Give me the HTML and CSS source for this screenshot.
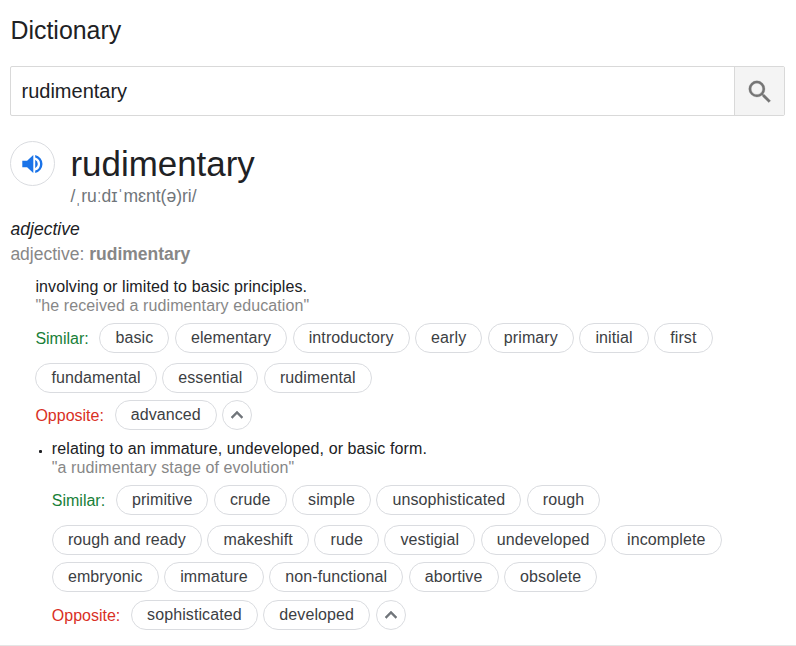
FILE: index.html
```html
<!DOCTYPE html>
<html lang="en">
<head>
<meta charset="utf-8">
<title>Dictionary</title>
<link rel="stylesheet" href="styles.css">
</head>
<body>
<main class="dictionary">
  <h1 class="title">Dictionary</h1>
  <div class="search">
    <div class="search-text">rudimentary</div>
    <div class="search-button">
      <svg width="30" height="30" viewBox="0 0 24 24" fill="#757575" stroke="#757575" stroke-width=".2"><path d="M15.5 14h-.79l-.28-.27A6.47 6.47 0 0 0 16 9.5 6.5 6.5 0 1 0 9.5 16c1.61 0 3.09-.59 4.23-1.57l.27.28v.79l5 4.99L20.49 19l-4.99-5zm-6 0C7.01 14 5 11.99 5 9.5S7.01 5 9.5 5 14 7.01 14 9.5 11.99 14 9.5 14z"/></svg>
    </div>
  </div>
  <header class="entry">
    <div class="speaker">
      <svg width="22" height="20" viewBox="0 0 22 20" fill="#1a73e8"><path d="M0.3 6.8h4.8L11.3 1v18l-6.2-5.8H.3zM13.2 5.8a4.7 4.7 0 0 1 0 8.4zM13.2 1a9.2 9.2 0 0 1 0 18v-2.4a6.9 6.9 0 0 0 0-13.2z"/></svg>
    </div>
    <div>
      <div class="headword">rudimentary</div>
      <div class="phonetic">/ˌruːdɪˈmɛnt(ə)ri/</div>
    </div>
  </header>
  <div class="pos">adjective</div>
  <div class="form">adjective: <b>rudimentary</b></div>

  <section class="sense">
    <div class="definition">involving or limited to basic principles.</div>
    <div class="example">"he received a rudimentary education"</div>
    <div class="row row-similar"><span class="label similar">Similar:</span><span class="chip">basic</span><span class="chip">elementary</span><span class="chip">introductory</span><span class="chip">early</span><span class="chip">primary</span><span class="chip">initial</span><span class="chip">first</span></div>
    <div class="row row-wide"><span class="chip">fundamental</span><span class="chip">essential</span><span class="chip">rudimental</span></div>
    <div class="row row-tight"><span class="label opposite">Opposite:</span><span class="chip">advanced</span><span class="toggle"><svg width="24" height="24" viewBox="0 0 24 24" fill="#70757a"><path d="M12 8l-6 6 1.41 1.41L12 10.83l4.59 4.58L18 14z" stroke="#70757a" stroke-width=".5"/></svg></span></div>
  </section>

  <section class="sense sense-sub">
    <div class="definition">relating to an immature, undeveloped, or basic form.</div>
    <div class="example">"a rudimentary stage of evolution"</div>
    <div class="row row-similar"><span class="label similar">Similar:</span><span class="chip">primitive</span><span class="chip">crude</span><span class="chip">simple</span><span class="chip">unsophisticated</span><span class="chip">rough</span></div>
    <div class="row row-wide"><span class="chip">rough and ready</span><span class="chip">makeshift</span><span class="chip">rude</span><span class="chip">vestigial</span><span class="chip">undeveloped</span><span class="chip">incomplete</span></div>
    <div class="row row-tight"><span class="chip">embryonic</span><span class="chip">immature</span><span class="chip">non-functional</span><span class="chip">abortive</span><span class="chip">obsolete</span></div>
    <div class="row row-last"><span class="label opposite">Opposite:</span><span class="chip">sophisticated</span><span class="chip">developed</span><span class="toggle"><svg width="24" height="24" viewBox="0 0 24 24" fill="#70757a"><path d="M12 8l-6 6 1.41 1.41L12 10.83l4.59 4.58L18 14z" stroke="#70757a" stroke-width=".5"/></svg></span></div>
  </section>
</main>
</body>
</html>
```
FILE: styles.css
```css
* { box-sizing: border-box; }
body {
  margin: 0;
  background: #fff;
  color: #202124;
  font-family: "Liberation Sans", Arial, sans-serif;
  font-size: 16px;
}
.dictionary {
  height: 646px;
  padding: 15px 11px 0 10px;
  border-bottom: 1px solid #e5e5e5;
  overflow: hidden;
  white-space: nowrap;
}
.title {
  margin: 0;
  padding-left: 0.5px;
  font-size: 24.9px;
  font-weight: 400;
  line-height: 30px;
}
.search {
  display: flex;
  height: 50px;
  margin-top: 21px;
  border: 1px solid #d9d9d9;
  border-radius: 2px;
}
.search-text {
  flex: 1;
  padding-left: 10.5px;
  font-size: 20px;
  line-height: 48px;
}
.search-button {
  display: flex;
  width: 50px;
  padding-top: 1px;
  align-items: center;
  justify-content: center;
  border-left: 1px solid #d9d9d9;
  background: #f4f4f4;
}
.entry {
  display: flex;
  height: 100px;
  padding-top: 25px;
  gap: 15.5px;
}
.speaker {
  display: flex;
  width: 45px;
  height: 45px;
  align-items: center;
  justify-content: center;
  border: 1px solid #dadce0;
  border-radius: 50%;
}
.headword {
  font-size: 34.9px;
  line-height: 46px;
}
.phonetic {
  color: #70757a;
  font-size: 17.5px;
  line-height: 18px;
}
.pos {
  margin-top: 1px;
  padding-left: 0.6px;
  font-size: 17.5px;
  font-style: italic;
  line-height: 25px;
}
.form {
  padding-left: 0.4px;
  color: #878787;
  font-size: 17.5px;
  line-height: 25px;
}
.sense {
  margin: 10px 0 0 25.4px;
}
.sense-sub {
  position: relative;
  margin: 9px 0 0 41.8px;
}
.sense-sub::before {
  content: "";
  position: absolute;
  top: 11px;
  left: -13px;
  width: 3px;
  height: 3px;
  border-radius: 1px;
  background: #202124;
}
.definition,
.example {
  letter-spacing: 0.1px;
  line-height: 19px;
}
.example { color: #878787; }
.row {
  display: flex;
  height: 30px;
  gap: 5.4px;
}
.row-similar { margin-top: 8px; }
.row-wide { margin-top: 10px; }
.row-tight { margin-top: 7px; }
.row-last { margin-top: 8px; }
.label {
  margin-right: 5.3px;
  line-height: 31px;
}
.similar { color: #188038; }
.opposite { color: #d93025; }
.chip {
  padding: 0 15.1px;
  border: 1px solid #dadce0;
  border-radius: 15px;
  color: #3c4043;
  letter-spacing: 0.1px;
  line-height: 28px;
}
.toggle {
  display: flex;
  width: 30px;
  align-items: center;
  justify-content: center;
  border: 1px solid #dadce0;
  border-radius: 50%;
}
```
